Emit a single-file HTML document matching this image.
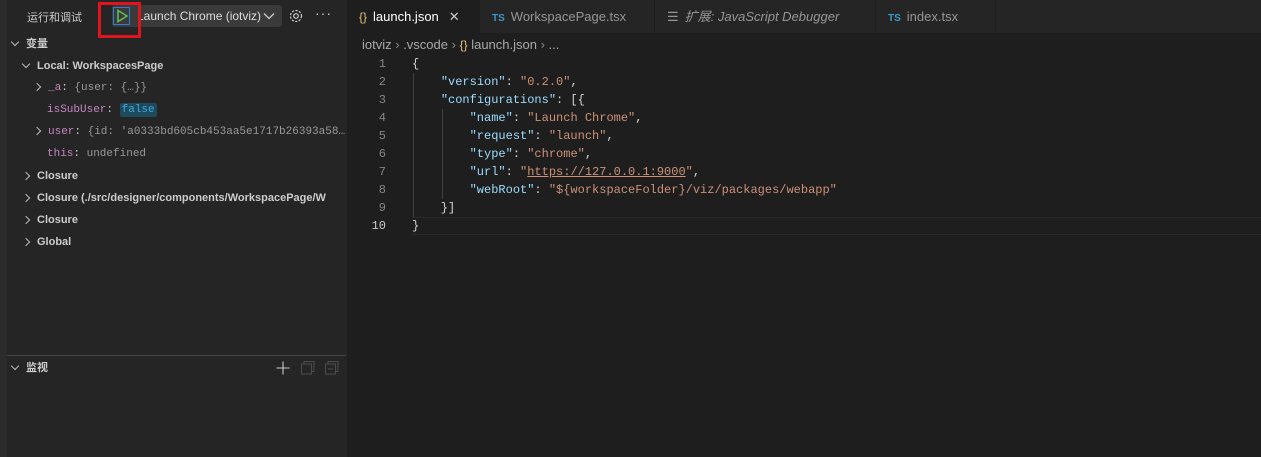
<!DOCTYPE html>
<html><head><meta charset="utf-8"><style>
*{margin:0;padding:0;box-sizing:border-box}
body{width:1261px;height:457px;background:#1e1e1e;font-family:"Liberation Sans","Noto Sans CJK SC",sans-serif;font-size:13px;color:#ccc;position:relative;overflow:hidden}
.a{position:absolute;white-space:nowrap}
.mono{font-family:"Liberation Mono","DejaVu Sans Mono",monospace;font-size:12px}
#strip{left:0;top:0;width:7px;height:457px;background:#2b2b2b}
#side{left:7px;top:0;width:340px;height:457px;background:#252526}
.row{position:absolute;height:22px;line-height:22px;font-size:11px;white-space:nowrap}
.b{font-weight:bold;color:#ccc}
.chev{display:inline-block;width:6px;height:6px;border-right:1px solid #bbb;border-bottom:1px solid #bbb;vertical-align:middle}
.r{transform:rotate(-45deg);margin-right:8px}
.d{transform:rotate(45deg);margin-right:8px;margin-top:-4px}
.k{color:#c586c0}.v{color:#999}
#tabs{left:347px;top:0;width:914px;height:33px;background:#252526}
.tab{position:absolute;top:0;height:33px;line-height:33px;font-size:13px;color:#969696;border-right:1px solid #1e1e1e;padding-left:12px}
.ts{color:#3c9ac6;font-size:10px;font-weight:bold;margin-right:6px}
.ln{position:absolute;width:40px;text-align:right;left:346px;color:#858585}
.code{position:absolute;left:412px;color:#d4d4d4}
.key{color:#9cdcfe}.str{color:#ce9178}
</style></head><body>
<div class="a" id="strip"></div>
<div class="a" id="side"></div>
<div class="a" style="left:27px;top:9px;font-size:11px;color:#ccc">运行和调试</div>
<div class="a" style="left:112px;top:5px;width:170px;height:22px;background:#3a3a3a;border-radius:3px"></div>
<div class="a" style="left:113px;top:7px;width:17px;height:18px;border:1px solid #2f7fd1"></div>
<svg class="a" style="left:115px;top:9px" width="14" height="14"><path d="M3 1.5 L12 7 L3 12.5 Z" fill="none" stroke="#5fbf5f" stroke-width="1.5"/></svg>
<div class="a" style="left:137px;top:9px;font-size:12px;color:#ddd">Launch Chrome (iotviz)</div>
<svg class="a" style="left:263px;top:12px" width="12" height="8"><path d="M1 1.5 L6 6.5 L11 1.5" fill="none" stroke="#ccc" stroke-width="1.3"/></svg>
<div class="a" style="left:98px;top:2px;width:43px;height:36px;border:3px solid #e0141e"></div>
<svg class="a" style="left:288px;top:8px" width="16" height="16"><circle cx="8" cy="8" r="2.3" fill="none" stroke="#ccc" stroke-width="1.2"/><circle cx="8" cy="8" r="5.5" fill="none" stroke="#ccc" stroke-width="1.2" stroke-dasharray="2.2 1.4"/></svg>
<div class="a" style="left:315px;top:5px;font-size:14px;color:#ccc;letter-spacing:1px">···</div>

<div class="row b" style="left:12px;top:33px"><span class="chev d"></span>变量</div>
<div class="row b" style="left:23px;top:55px"><span class="chev d"></span>Local: WorkspacesPage</div>
<div class="row mono" style="left:34px;top:77px;font-size:11px"><span class="chev r"></span><span class="k">_a</span>: <span class="v">{user: {…}}</span></div>
<div class="row mono" style="left:47px;top:99px;font-size:11px"><span class="k">isSubUser</span>: <span style="background:#1d4a5c;color:#3fa9d6;padding:1px 2px;border-radius:2px">false</span></div>
<div class="row mono" style="left:34px;top:121px;font-size:11px"><span class="chev r"></span><span class="k">user</span>: <span class="v">{id: 'a0333bd605cb453aa5e1717b26393a58…</span></div>
<div class="row mono" style="left:47px;top:143px;font-size:11px"><span class="k">this</span>: <span class="v">undefined</span></div>
<div class="row b" style="left:23px;top:165px"><span class="chev r"></span>Closure</div>
<div class="row b" style="left:23px;top:187px;width:323px;overflow:hidden"><span class="chev r"></span>Closure (./src/designer/components/WorkspacePage/W</div>
<div class="row b" style="left:23px;top:209px"><span class="chev r"></span>Closure</div>
<div class="row b" style="left:23px;top:231px"><span class="chev r"></span>Global</div>

<div class="a" style="left:7px;top:355px;width:339px;height:1px;background:#444"></div>
<div class="row b" style="left:12px;top:357px"><span class="chev d"></span>监视</div>
<svg class="a" style="left:276px;top:361px" width="14" height="14"><path d="M7 0.5V13.5M0.5 7H13.5" stroke="#ccc" stroke-width="1.1"/></svg>
<svg class="a" style="left:301px;top:361px" width="14" height="14" opacity=".35"><rect x="3" y="0.5" width="10" height="10" fill="none" stroke="#999"/><rect x="0.5" y="3" width="10" height="10" fill="#252526" stroke="#999"/></svg>
<svg class="a" style="left:325px;top:361px" width="14" height="14" opacity=".35"><rect x="3" y="0.5" width="10" height="10" fill="none" stroke="#999"/><rect x="0.5" y="3" width="10" height="10" fill="#252526" stroke="#999"/><path d="M3 8H8" stroke="#999"/></svg>

<div class="a" id="tabs"></div>
<div class="tab" style="left:347px;width:133px;background:#1e1e1e;color:#fff"><span style="color:#e5c07b;font-size:12px;margin-right:6px">{}</span>launch.json<span style="margin-left:10px;color:#ccc">✕</span></div>
<div class="tab" style="left:480px;width:175px"><span class="ts">TS</span>WorkspacePage.tsx</div>
<div class="tab" style="left:655px;width:221px;font-style:italic"><span style="font-style:normal;margin-right:6px">☰</span>扩展: JavaScript Debugger</div>
<div class="tab" style="left:876px;width:120px"><span class="ts">TS</span>index.tsx</div>
<div class="a" style="left:362px;top:37px;font-size:13px;color:#aaa">iotviz <span style="color:#888">›</span> .vscode <span style="color:#888">›</span> <span style="color:#e5c07b;font-size:12px">{}</span> launch.json <span style="color:#888">›</span> ...</div>

<div class="mono" style="position:absolute;left:0;top:55px;line-height:18px">
<div class="ln" style="top:0">1</div><div class="ln" style="top:18px">2</div><div class="ln" style="top:36px">3</div><div class="ln" style="top:54px">4</div><div class="ln" style="top:72px">5</div><div class="ln" style="top:90px">6</div><div class="ln" style="top:108px">7</div><div class="ln" style="top:126px">8</div><div class="ln" style="top:144px">9</div><div class="ln" style="top:162px;color:#ccc">10</div>
<div class="a" style="left:412px;top:162px;width:849px;height:18px;border-top:1px solid #282828;border-bottom:1px solid #282828"></div>
<div class="a" style="left:413px;top:18px;width:1px;height:144px;background:#404040"></div>
<div class="a" style="left:442px;top:54px;width:1px;height:90px;background:#404040"></div>
<pre class="code" style="top:0;font-family:inherit;font-size:12px;line-height:18px">{
    <span class="key">"version"</span>: <span class="str">"0.2.0"</span>,
    <span class="key">"configurations"</span>: [{
        <span class="key">"name"</span>: <span class="str">"Launch Chrome"</span>,
        <span class="key">"request"</span>: <span class="str">"launch"</span>,
        <span class="key">"type"</span>: <span class="str">"chrome"</span>,
        <span class="key">"url"</span>: <span class="str">"<u>https://127.0.0.1:9000</u>"</span>,
        <span class="key">"webRoot"</span>: <span class="str">"${workspaceFolder}/viz/packages/webapp"</span>
    }]
}</pre>
</div>
</body></html>
